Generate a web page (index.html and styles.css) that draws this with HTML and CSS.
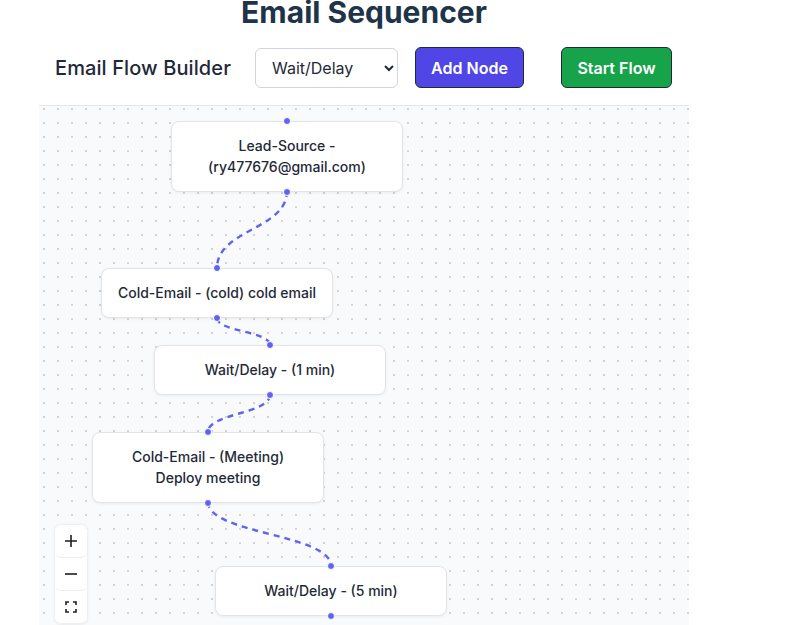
FILE: index.html
```html
<!DOCTYPE html>
<html>
<head>
<meta charset="utf-8">
<link rel="stylesheet" href="styles.css">
</head>
<body>
<div class="app">
  <h1 class="title">Email Sequencer</h1>
  <div class="toolbar">
    <span class="toolbar-title">Email Flow Builder</span>
    <select class="type-select">
      <option>Wait/Delay</option>
      <option>Cold-Email</option>
      <option>Lead-Source</option>
    </select>
    <button class="btn btn-add">Add Node</button>
    <button class="btn btn-start">Start Flow</button>
  </div>
  <div class="canvas">
    <svg class="edges" width="650" height="540" viewBox="0 0 650 540">
      <g fill="none" stroke="#6161f2" stroke-width="2.4" stroke-dasharray="6 5">
        <path d="M248 86 C248 124.5, 178 124.5, 178 163"/>
        <path d="M178 213 C178 226.5, 231 226.5, 231 240"/>
        <path d="M231 290 C231 308.5, 169 308.5, 169 327"/>
        <path d="M169 397 C169 429, 292 429, 292 461"/>
      </g>
    </svg>
    <div class="node n1"><span class="handle top"></span>Lead-Source -<br>(ry477676@gmail.com)<span class="handle bottom"></span></div>
    <div class="node n2"><span class="handle top"></span>Cold-Email - (cold) cold email<span class="handle bottom"></span></div>
    <div class="node n3"><span class="handle top"></span>Wait/Delay - (1 min)<span class="handle bottom"></span></div>
    <div class="node n4"><span class="handle top"></span>Cold-Email - (Meeting)<br>Deploy meeting<span class="handle bottom"></span></div>
    <div class="node n5"><span class="handle top"></span>Wait/Delay - (5 min)<span class="handle bottom"></span></div>
    <div class="controls">
      <button class="ctrl"><svg width="14" height="14" viewBox="0 0 14 14"><path d="M7 1v12M1 7h12" stroke="#1f1f1f" stroke-width="1.6" fill="none"/></svg></button>
      <button class="ctrl"><svg width="14" height="14" viewBox="0 0 14 14"><path d="M1 7h12" stroke="#1f1f1f" stroke-width="1.6" fill="none"/></svg></button>
      <button class="ctrl"><svg width="12" height="12" viewBox="0 0 12 12"><path d="M1 4V1h3M8 1h3v3M11 8v3H8M4 11H1V8" stroke="#1f1f1f" stroke-width="1.6" fill="none"/></svg></button>
    </div>
  </div>
</div>
</body>
</html>
```

FILE: styles.css
```css
html, body {
  margin: 0;
  padding: 0;
  background: #ffffff;
  font-family: Inter, "Noto Sans", sans-serif;
  overflow: hidden;
}

.app {
  width: 650px;
  margin-left: 39px;
}

.title {
  margin: -5px 0 0 0;
  font-size: 30px;
  line-height: 35px;
  font-weight: 700;
  color: #1e3448;
  text-align: center;
}

.toolbar {
  height: 75px;
  display: flex;
  align-items: center;
  padding-left: 16px;
}

.toolbar-title {
  font-size: 20px;
  font-weight: 500;
  color: #1f2937;
  margin-right: 24px;
  letter-spacing: 0.1px;
}

.type-select {
  width: 143px;
  height: 40px;
  border: 1px solid #d1d5db;
  border-radius: 6px;
  background: #ffffff;
  font-family: Inter, sans-serif;
  font-size: 16px;
  color: #1f2937;
  padding: 0 10px 0 12px;
  margin-right: 17px;
}

.btn {
  height: 41px;
  border: 1px solid #1f2937;
  border-radius: 6px;
  color: #ffffff;
  font-family: Inter, sans-serif;
  font-size: 16px;
  font-weight: 600;
  padding: 0;
}

.btn-add {
  width: 109px;
  background: #4f46e5;
  margin-right: 37px;
}

.btn-start {
  width: 111px;
  background: #16a34a;
}

.canvas {
  position: relative;
  height: 540px;
  border-top: 1px solid #e5e7eb;
  background-color: #f9fafb;
  background-image: radial-gradient(circle, #cfd1d5 0.7px, transparent 0.9px);
  background-size: 14px 14px;
  background-position: -2px -4px;
  overflow: hidden;
}

.edges {
  position: absolute;
  left: 0;
  top: -1px;
}

.node {
  position: absolute;
  box-sizing: border-box;
  width: 232px;
  padding: 13px 8px 14px;
  background: #ffffff;
  border: 1px solid #e2e4e8;
  border-radius: 8px;
  box-shadow: 0 1px 3px rgba(0, 0, 0, 0.06);
  font-size: 14px;
  line-height: 21px;
  font-weight: 500;
  color: #1f2a37;
  text-align: center;
}

.n1 { left: 132px; top: 15px; }
.n2 { left: 62px; top: 162px; }
.n3 { left: 115px; top: 239px; }
.n4 { left: 53px; top: 326px; }
.n5 { left: 176px; top: 460px; }

.handle {
  position: absolute;
  left: 50%;
  width: 6px;
  height: 6px;
  margin-left: -4px;
  border-radius: 50%;
  background: #6161f2;
  border: 1px solid #ffffff;
}

.handle.top { top: -5px; }
.handle.bottom { bottom: -5px; }

.controls {
  position: absolute;
  left: 16px;
  top: 419px;
  width: 32px;
  display: flex;
  flex-direction: column;
  background: #ffffff;
  border-radius: 6px;
  box-shadow: 0 0 3px rgba(0, 0, 0, 0.12);
}

.ctrl {
  width: 32px;
  height: 33px;
  border: none;
  border-bottom: 1px solid #eeeeee;
  background: #ffffff;
  display: flex;
  align-items: center;
  justify-content: center;
  padding: 0;
  border-radius: 6px;
}
```
